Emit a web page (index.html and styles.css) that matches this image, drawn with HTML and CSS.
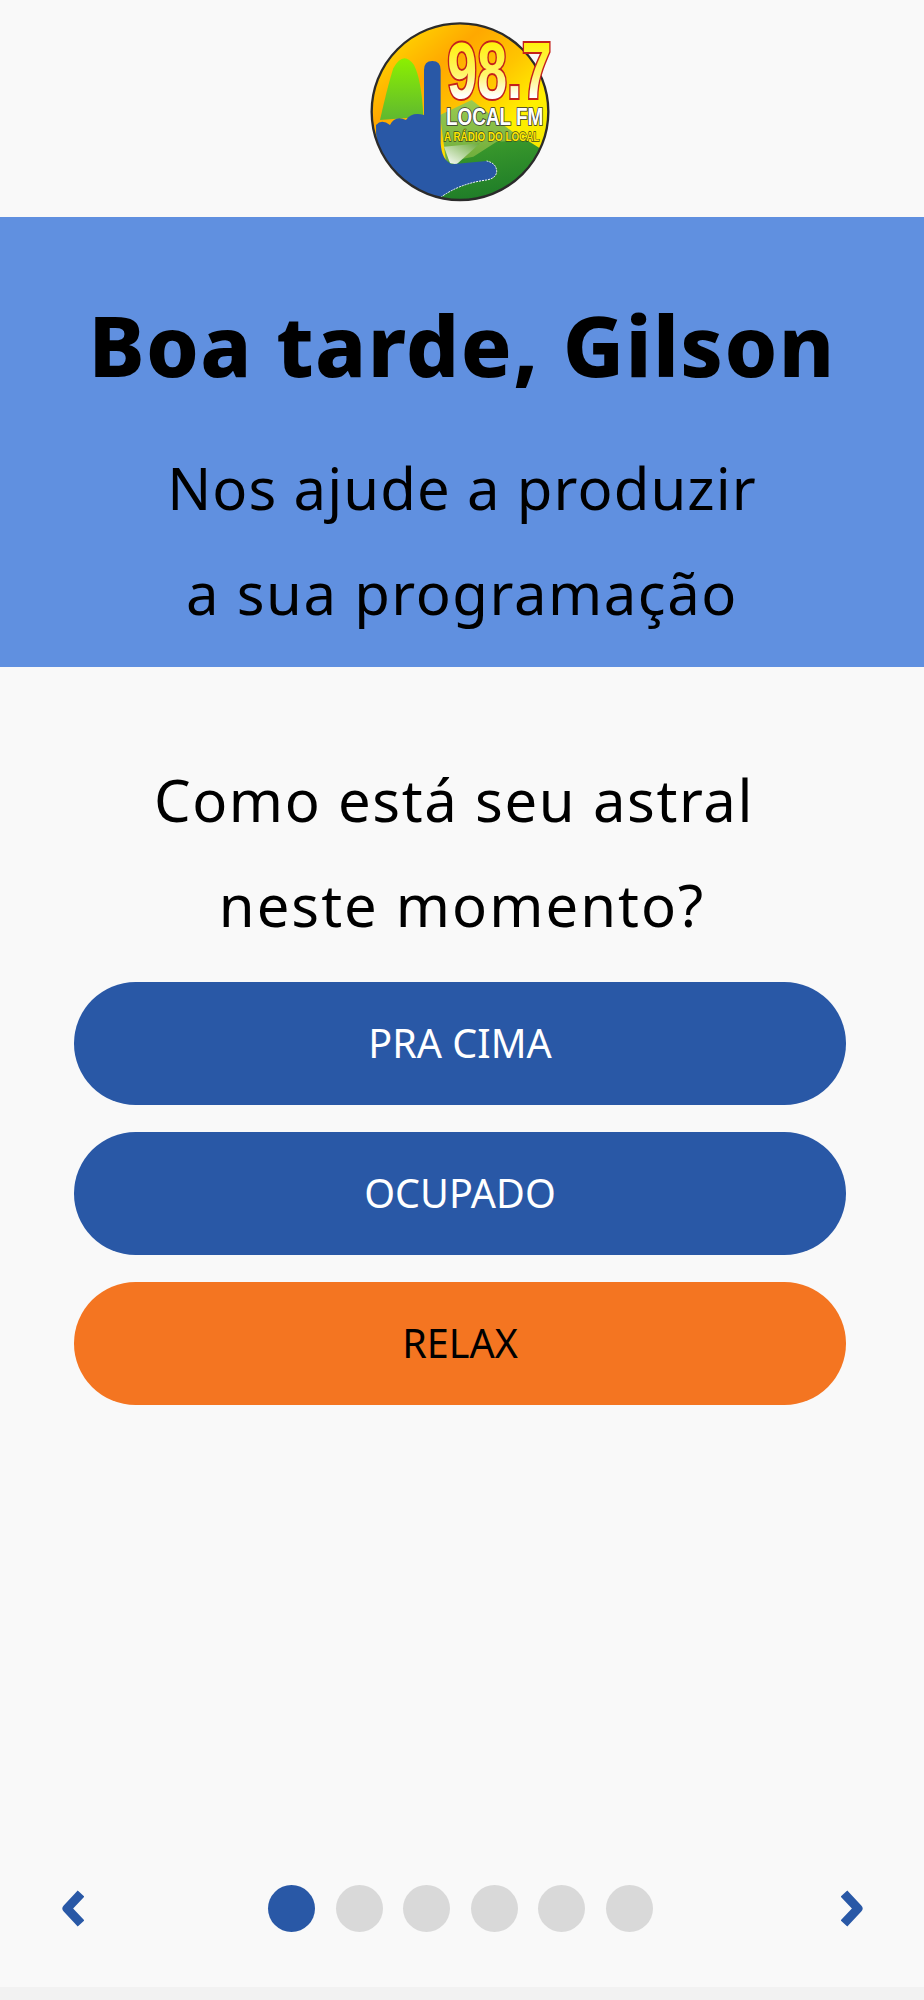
FILE: index.html
```html
<!DOCTYPE html>
<html lang="pt">
<head>
<meta charset="utf-8">
<title>98.7 Local FM</title>
<link rel="stylesheet" href="styles.css">
</head>
<body>
<div class="app">
  <header class="logo-bar">
    <svg class="logo" viewBox="0 0 720 651" width="240" height="217" aria-label="98.7 Local FM">
      <defs>
        <linearGradient id="sky" x1="0.1" y1="0.1" x2="0.75" y2="0.85">
          <stop offset="0" stop-color="#ffd800"/>
          <stop offset="0.3" stop-color="#ffa800"/>
          <stop offset="0.55" stop-color="#ffc400"/>
          <stop offset="0.8" stop-color="#fff000"/>
          <stop offset="1" stop-color="#f6e800"/>
        </linearGradient>
        <linearGradient id="hill" x1="0" y1="0" x2="0" y2="1">
          <stop offset="0" stop-color="#8cf000"/>
          <stop offset="1" stop-color="#5fb830"/>
        </linearGradient>
        <linearGradient id="mid" x1="0" y1="0" x2="0" y2="1">
          <stop offset="0" stop-color="#9ccb50"/>
          <stop offset="1" stop-color="#6aaa3a"/>
        </linearGradient>
        <linearGradient id="ground" x1="0" y1="0" x2="0.3" y2="1">
          <stop offset="0" stop-color="#3f9e2c"/>
          <stop offset="1" stop-color="#1c7a28"/>
        </linearGradient>
        <linearGradient id="beam" x1="0" y1="1" x2="1" y2="0">
          <stop offset="0" stop-color="#ffffff"/>
          <stop offset="1" stop-color="#6aaa3a"/>
        </linearGradient>
        <linearGradient id="digits" x1="0" y1="0" x2="0" y2="1">
          <stop offset="0.15" stop-color="#fff000"/>
          <stop offset="0.55" stop-color="#fff66a"/>
          <stop offset="0.8" stop-color="#ffffff"/>
        </linearGradient>
        <clipPath id="disc"><circle cx="360" cy="335" r="265"/></clipPath>
      </defs>
      <g clip-path="url(#disc)">
        <rect x="90" y="60" width="540" height="550" fill="url(#sky)"/>
        <path d="M120 360 Q145 250 160 205 Q190 150 222 195 Q245 240 250 350 Z" fill="url(#hill)"/>
        <path d="M300 345 L395 300 L600 460 L320 500 Z" fill="url(#mid)"/>
        <path d="M300 490 L400 470 L470 425 L560 420 L640 470 L640 620 L280 620 Z" fill="url(#ground)"/>
        <path d="M312 440 L420 430 L350 493 L330 490 Z" fill="url(#beam)"/>
        <path d="M252 210 Q252 183 277 183 Q302 183 302 210 L302 430 Q305 480 335 493 L440 483 Q470 490 470 515 Q468 535 440 540 Q360 550 302 592 Q180 580 130 490 Q105 430 108 375 Q125 355 150 375 Q165 345 198 360 Q215 335 252 345 Z" fill="#2958a6"/>
      </g>
      <path d="M302 592 Q360 550 440 540 Q468 535 470 515 Q470 490 440 483" fill="none" stroke="#fff" stroke-width="3" stroke-dasharray="6 3"/>
      <circle cx="360" cy="335" r="265" fill="none" stroke="#2b2b2b" stroke-width="7"/>
      <text class="logo-num" transform="translate(322 294) scale(0.67 1)">98.7</text>
      <text class="logo-name" x="318" y="375" textLength="292" lengthAdjust="spacingAndGlyphs">LOCAL FM</text>
      <text class="logo-tag" x="312" y="423" textLength="286" lengthAdjust="spacingAndGlyphs">A RÁDIO DO LOCAL</text>
    </svg>
  </header>

  <section class="hero">
    <h1 class="hero-title">Boa tarde, Gilson</h1>
    <p class="hero-sub">Nos ajude a produzir<span class="hero-sub-b">a sua programação</span></p>
  </section>

  <main class="quiz">
    <h2 class="question"><span class="q-line-a">Como está seu astral</span><span class="q-line-b">neste momento?</span></h2>
    <div class="options">
      <button class="option">PRA CIMA</button>
      <button class="option">OCUPADO</button>
      <button class="option option-active">RELAX</button>
    </div>
  </main>

  <nav class="pager">
    <svg class="arrow" viewBox="0 0 23 37" width="23" height="37"><path d="M20 3.5 L6 18.5 L20 33.5" fill="none" stroke="#2958a6" stroke-width="9" stroke-linejoin="round"/></svg>
    <div class="dots">
      <span class="dot dot-on"></span>
      <span class="dot"></span>
      <span class="dot"></span>
      <span class="dot"></span>
      <span class="dot"></span>
      <span class="dot"></span>
    </div>
    <svg class="arrow" viewBox="0 0 23 37" width="23" height="37"><path d="M3 3.5 L17 18.5 L3 33.5" fill="none" stroke="#2958a6" stroke-width="9" stroke-linejoin="round"/></svg>
  </nav>
  <div class="footer-strip"></div>
</div>
</body>
</html>
```

FILE: styles.css
```css
* { box-sizing: border-box; margin: 0; padding: 0; }
html, body { background: #f9f9f9; }
body { font-family: "Noto Sans", "Open Sans", sans-serif; color: #000; }
.app { display: flex; flex-direction: column; width: 924px; height: 2000px; }
.logo-bar { height: 217px; display: flex; justify-content: center; padding-right: 4px; }
.logo { display: block; }
.logo-num { font-family: "Liberation Sans", sans-serif; font-weight: 700; font-size: 240px; fill: url(#digits); stroke: #c4201c; stroke-width: 12px; paint-order: stroke; }
.logo-name { font-family: "Liberation Sans", sans-serif; font-weight: 700; font-size: 70px; fill: #fff; stroke: #333; stroke-width: 5px; paint-order: stroke; }
.logo-tag { font-family: "Liberation Sans", sans-serif; font-weight: 700; font-size: 38px; fill: #ffe600; stroke: #3a4a20; stroke-width: 4px; paint-order: stroke; }
.hero { height: 450px; background: #6090e0; display: flex; flex-direction: column; align-items: center; text-align: center; padding-top: 72px; }
.hero-title { font-size: 84px; font-weight: 800; line-height: 112px; letter-spacing: 1.4px; }
.hero-sub { font-size: 58px; font-weight: 400; line-height: 105px; margin-top: 34px; letter-spacing: 1.1px; }
.hero-sub-b { display: block; letter-spacing: 1.55px; }
.quiz { display: flex; flex-direction: column; align-items: center; padding: 80px 78px 0 74px; }
.question { font-size: 58px; font-weight: 400; line-height: 105px; text-align: center; letter-spacing: 1.6px; }
.q-line-a { display: block; margin-right: 12px; }
.q-line-b { display: block; margin-left: 4px; letter-spacing: 2px; }
.options { display: flex; flex-direction: column; gap: 27px; width: 772px; margin-top: 25px; }
.option { height: 123px; border: 0; border-radius: 62px; background: #2958a6; color: #fff; font-family: inherit; font-size: 39.5px; padding-bottom: 1px; }
.option-active { background: #f47521; color: #000; }
.pager { margin-top: auto; height: 47px; display: flex; justify-content: space-between; align-items: center; padding: 0 60px 0 61px; }
.dots { display: flex; gap: 20.6px; margin-left: -4px; }
.dot { width: 47px; height: 47px; border-radius: 50%; background: #d9d9d9; }
.dot-on { background: #2958a6; }
.footer-strip { height: 13px; margin-top: 55px; background: #f2f2f2; }
```
